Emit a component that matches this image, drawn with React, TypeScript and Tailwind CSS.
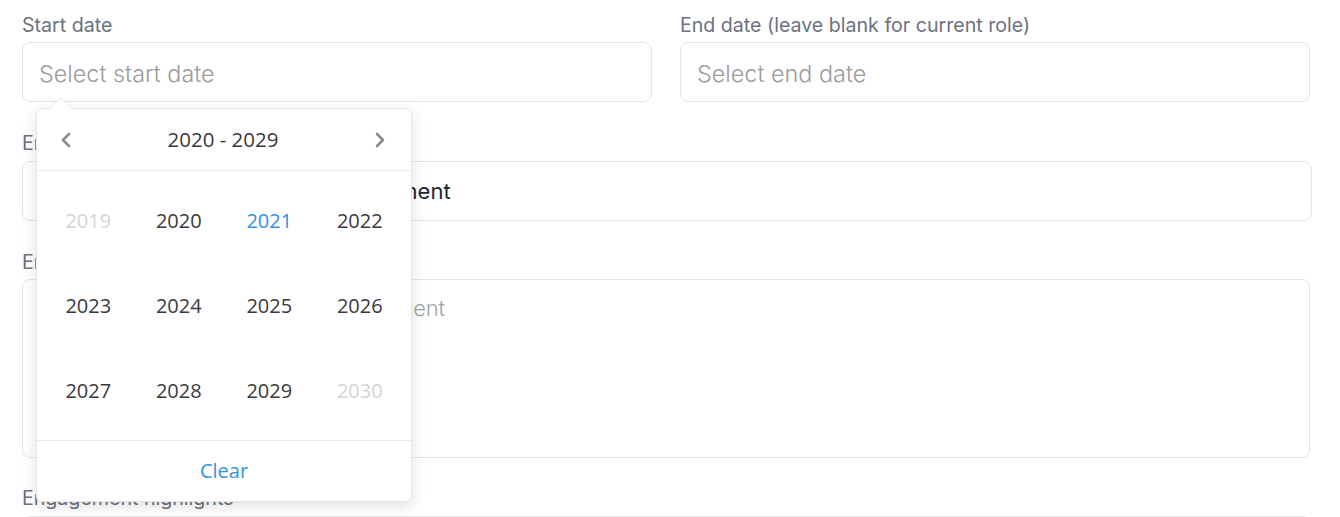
import { ChevronLeft, ChevronRight } from 'lucide-react';

const years: { label: string; muted?: boolean; active?: boolean }[] = [
  { label: '2019', muted: true },
  { label: '2020' },
  { label: '2021', active: true },
  { label: '2022' },
  { label: '2023' },
  { label: '2024' },
  { label: '2025' },
  { label: '2026' },
  { label: '2027' },
  { label: '2028' },
  { label: '2029' },
  { label: '2030', muted: true },
];

function Label({ children }: { children: React.ReactNode }) {
  return <div className="text-[19.6px] leading-6 text-[#6b7280]">{children}</div>;
}

function YearPicker() {
  return (
    <div
      className="absolute left-[36px] top-[108px] w-[376px] rounded-[6px] border border-[#e4e4e4] bg-white shadow-[0_4px_16px_rgba(0,0,0,0.12)]"
      style={{ fontFamily: '"Open Sans", "Noto Sans", sans-serif' }}
    >
      {/* arrow */}
      <div className="absolute -top-[12px] left-[12px] h-0 w-0 border-x-[12px] border-b-[12px] border-x-transparent border-b-[#e4e4e4]" />
      <div className="absolute -top-[11px] left-[13px] h-0 w-0 border-x-[11px] border-b-[11px] border-x-transparent border-b-white" />
      <div className="flex h-[62px] items-center justify-between border-b border-[#ebebeb] pl-[17px] pr-[19px]">
        <ChevronLeft className="h-[24px] w-[24px] text-[#8a8a8a]" strokeWidth={2.6} />
        <span className="text-[20.5px] text-[#3a3a3a]">2020 - 2029</span>
        <ChevronRight className="h-[24px] w-[24px] text-[#8a8a8a]" strokeWidth={2.6} />
      </div>
      <div className="grid grid-cols-4 px-[6px] py-[7px]">
        {years.map((y) => (
          <div
            key={y.label}
            className={`flex h-[85px] items-center justify-center text-[20px] leading-7 ${
              y.muted ? 'text-[#d4d4d4]' : y.active ? 'text-[#2f93df]' : 'text-[#3a3a3a]'
            }`}
          >
            {y.label}
          </div>
        ))}
      </div>
      <div className="flex h-[61px] items-center justify-center border-t border-[#ebebeb]">
        <span className="text-[20px] text-[#2f93df]">Clear</span>
      </div>
    </div>
  );
}

export default function App() {
  return (
    <div
      className="relative h-[517px] overflow-hidden bg-white pl-[22px] pr-[30px] pt-[13px]"
      style={{ fontFamily: 'Inter, "Liberation Sans", sans-serif' }}
    >
      <div className="grid grid-cols-2 gap-[28px]">
        <div>
          <Label>Start date</Label>
          <div className="mt-[5px] flex h-[60px] items-center rounded-[8px] border border-[#e5e5e5] px-[16px] pt-[4px] text-[23.4px] font-light text-[#9b9b9b]">
            Select start date
          </div>
        </div>
        <div>
          <Label>End date (leave blank for current role)</Label>
          <div className="mt-[5px] flex h-[60px] items-center rounded-[8px] border border-[#e5e5e5] px-[16px] pt-[4px] text-[23.4px] font-light text-[#9b9b9b]">
            Select end date
          </div>
        </div>
      </div>

      <div className="mt-[29px]">
        <Label>Engagement title</Label>
        <div className="mr-[-2px] mt-[6px] flex h-[60px] items-center rounded-[8px] border border-[#e5e5e5] px-[17px] text-[22px] text-[#1f2430]">
          Led the platform migration engagement
        </div>
      </div>

      <div className="mt-[29px]">
        <Label>Engagement summary</Label>
        <div className="mt-[5px] h-[179px] rounded-[8px] border border-[#e5e5e5] px-[17px] pt-[12px] text-[22px] font-light tracking-[-0.2px] text-[#a3a3a3]">
          Summarise your role in this engagement
        </div>
      </div>

      <div className="mt-[28px]">
        <Label>Engagement highlights</Label>
        <div className="mt-[6px] h-[60px] rounded-[8px] border border-[#e5e5e5]" />
      </div>

      <YearPicker />
    </div>
  );
}
